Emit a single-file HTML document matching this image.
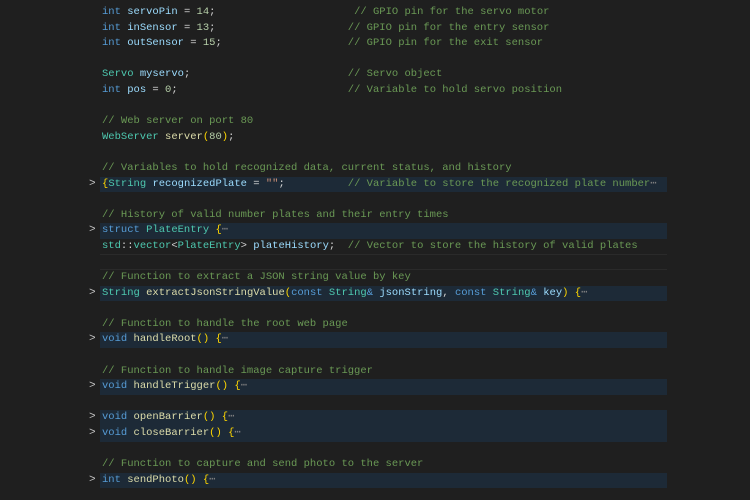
<!DOCTYPE html>
<html><head><meta charset="utf-8"><style>
html,body{margin:0;padding:0;background:#1f1f1f;width:750px;height:500px;overflow:hidden}
.c{position:absolute;left:0;top:5px;width:750px;font-family:"Liberation Mono",monospace;font-size:10.5px;color:#d4d4d4}
.l{position:relative;height:15.6px;line-height:15.6px;padding-left:102px;white-space:pre}
.h::before{content:"";position:absolute;left:100px;width:567px;top:0;height:15.6px;background:#1d2a37;z-index:0}
.b::after{content:"";position:absolute;left:100px;width:567px;bottom:0;height:1px;background:#2a2a2a}
.t{position:relative}
.ch{position:absolute;left:89px;top:0;color:#c5c5c5;font-size:11px}
.k{color:#569cd6}.ty{color:#4ec9b0}.f{color:#dcdcaa}.v{color:#9cdcfe}.n{color:#b5cea8}.cm{color:#6a9955}.br{color:#ffd700}.s{color:#ce9178}.e{color:#7f7f7f}
</style></head><body><div class="c">
<div class="l"><span class="t"><span class="k">int</span> <span class="v">servoPin</span> = <span class="n">14</span>;                      <span class="cm">// GPIO pin for the servo motor</span></span></div>
<div class="l"><span class="t"><span class="k">int</span> <span class="v">inSensor</span> = <span class="n">13</span>;                     <span class="cm">// GPIO pin for the entry sensor</span></span></div>
<div class="l"><span class="t"><span class="k">int</span> <span class="v">outSensor</span> = <span class="n">15</span>;                    <span class="cm">// GPIO pin for the exit sensor</span></span></div>
<div class="l"> </div>
<div class="l"><span class="t"><span class="ty">Servo</span> <span class="v">myservo</span>;                         <span class="cm">// Servo object</span></span></div>
<div class="l"><span class="t"><span class="k">int</span> <span class="v">pos</span> = <span class="n">0</span>;                           <span class="cm">// Variable to hold servo position</span></span></div>
<div class="l"> </div>
<div class="l"><span class="t cm">// Web server on port 80</span></div>
<div class="l"><span class="t"><span class="ty">WebServer</span> <span class="f">server</span><span class="br">(</span><span class="n">80</span><span class="br">)</span>;</span></div>
<div class="l"> </div>
<div class="l"><span class="t cm">// Variables to hold recognized data, current status, and history</span></div>
<div class="l h"><span class="ch">&gt;</span><span class="t"><span class="br">{</span><span class="ty">String</span> <span class="v">recognizedPlate</span> = <span class="s">""</span>;          <span class="cm">// Variable to store the recognized plate number</span><span class="e">⋯</span></span></div>
<div class="l"> </div>
<div class="l"><span class="t cm">// History of valid number plates and their entry times</span></div>
<div class="l h"><span class="ch">&gt;</span><span class="t"><span class="k">struct</span> <span class="ty">PlateEntry</span> <span class="br">{</span><span class="e">⋯</span></span></div>
<div class="l b"><span class="t"><span class="ty">std</span>::<span class="ty">vector</span>&lt;<span class="ty">PlateEntry</span>&gt; <span class="v">plateHistory</span>;  <span class="cm">// Vector to store the history of valid plates</span></span></div>
<div class="l b"> </div>
<div class="l"><span class="t cm">// Function to extract a JSON string value by key</span></div>
<div class="l h"><span class="ch">&gt;</span><span class="t"><span class="ty">String</span> <span class="f">extractJsonStringValue</span><span class="br">(</span><span class="k">const</span> <span class="ty">String</span><span class="k">&amp;</span> <span class="v">jsonString</span>, <span class="k">const</span> <span class="ty">String</span><span class="k">&amp;</span> <span class="v">key</span><span class="br">)</span> <span class="br">{</span><span class="e">⋯</span></span></div>
<div class="l"> </div>
<div class="l"><span class="t cm">// Function to handle the root web page</span></div>
<div class="l h"><span class="ch">&gt;</span><span class="t"><span class="k">void</span> <span class="f">handleRoot</span><span class="br">()</span> <span class="br">{</span><span class="e">⋯</span></span></div>
<div class="l"> </div>
<div class="l"><span class="t cm">// Function to handle image capture trigger</span></div>
<div class="l h"><span class="ch">&gt;</span><span class="t"><span class="k">void</span> <span class="f">handleTrigger</span><span class="br">()</span> <span class="br">{</span><span class="e">⋯</span></span></div>
<div class="l"> </div>
<div class="l h"><span class="ch">&gt;</span><span class="t"><span class="k">void</span> <span class="f">openBarrier</span><span class="br">()</span> <span class="br">{</span><span class="e">⋯</span></span></div>
<div class="l h"><span class="ch">&gt;</span><span class="t"><span class="k">void</span> <span class="f">closeBarrier</span><span class="br">()</span> <span class="br">{</span><span class="e">⋯</span></span></div>
<div class="l"> </div>
<div class="l"><span class="t cm">// Function to capture and send photo to the server</span></div>
<div class="l h"><span class="ch">&gt;</span><span class="t"><span class="k">int</span> <span class="f">sendPhoto</span><span class="br">()</span> <span class="br">{</span><span class="e">⋯</span></span></div>
</div></body></html>
